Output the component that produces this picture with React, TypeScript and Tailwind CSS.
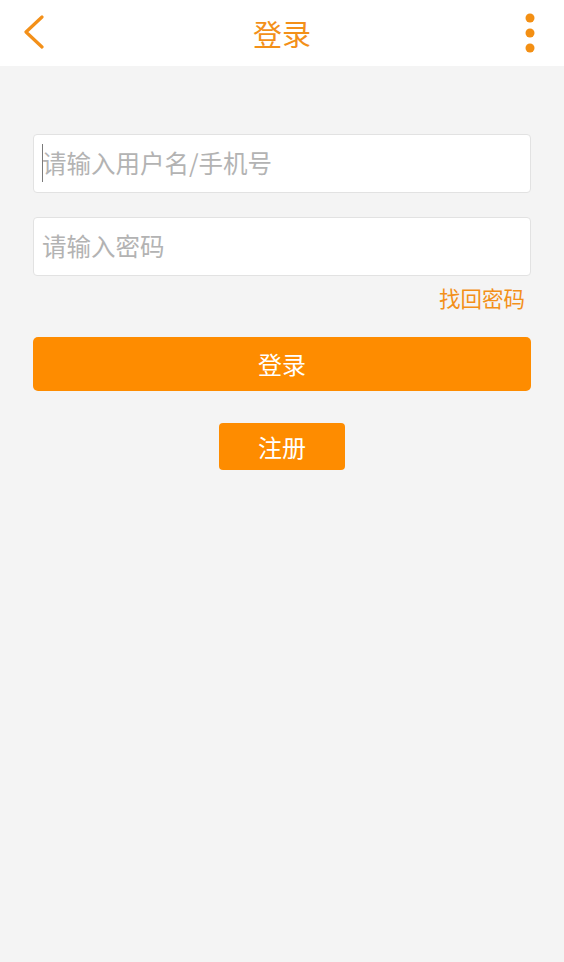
const orange = 'text-[#f39019]'

function BackIcon() {
  return (
    <svg width="24" height="36" viewBox="0 0 24 36" fill="none">
      <path d="M19 2 L3 17 L19 32" stroke="#f39019" strokeWidth="3.2" strokeLinecap="round" strokeLinejoin="round" />
    </svg>
  )
}

function MoreIcon() {
  return (
    <svg width="12" height="42" viewBox="0 0 12 42" fill="#f38f13">
      <circle cx="6" cy="6" r="4.5" />
      <circle cx="6" cy="21" r="4.5" />
      <circle cx="6" cy="36" r="4.5" />
    </svg>
  )
}

function TextField({ placeholder, caret }: { placeholder: string; caret?: boolean }) {
  return (
    <div className="relative h-[59px] bg-white rounded-[4px] border border-[#e2e2e2] flex items-center pl-[8px]">
      {caret && <span className="absolute left-[8px] top-[9px] h-[38px] w-px bg-[#7a7a7a]" />}
      <span className="text-[24.5px] text-[#b3b3b3] leading-none">{placeholder}</span>
    </div>
  )
}

export default function App() {
  return (
    <div
      className="w-[564px] h-[962px] bg-[#f4f4f4] flex flex-col"
      style={{ fontFamily: '"Noto Sans CJK SC", "Noto Sans", sans-serif' }}
    >
      <header className="relative h-[66px] bg-white flex items-center justify-between pl-[23px] pr-[28px]">
        <BackIcon />
        <h1 className={`absolute inset-x-0 text-center text-[29px] leading-none pointer-events-none ${orange}`}>登录</h1>
        <MoreIcon />
      </header>

      <main className="px-[33px] pt-[68px] flex flex-col">
        <TextField placeholder="请输入用户名/手机号" caret />
        <div className="h-[24px]" />
        <TextField placeholder="请输入密码" />
        <div className="h-[61px] flex justify-end pr-[6px] pt-[11px]">
          <span className={`text-[21.5px] leading-none ${orange}`}>找回密码</span>
        </div>
        <button className="h-[54px] rounded-[5px] bg-[#fe8c00] text-white text-[24px] leading-none">
          登录
        </button>
        <div className="flex justify-center pt-[32px]">
          <button className="w-[126px] h-[47px] rounded-[4px] bg-[#fe8c00] text-white text-[24px] leading-none">
            注册
          </button>
        </div>
      </main>
    </div>
  )
}
